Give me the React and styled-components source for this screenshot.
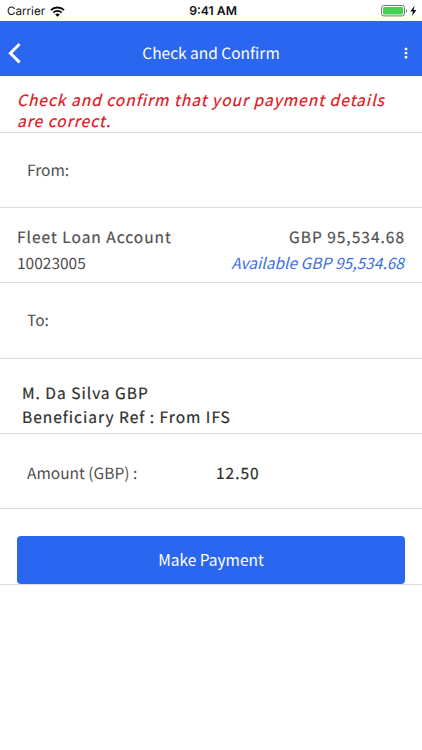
import React from 'react'
import styled, { createGlobalStyle } from 'styled-components'

const App = () => {
  return (
    <>
      <GlobalStyle />
      <Screen>
        <StatusBar>
          <Carrier>
            <span>Carrier</span>
            <svg width="15" height="11" viewBox="0 0 15 11">
              <g fill="none" stroke="#000" strokeWidth="1.9">
                <path d="M1 4.1a9.3 9.3 0 0 1 13 0" />
                <path d="M3.4 6.6a5.8 5.8 0 0 1 8.2 0" />
              </g>
              <path d="M7.5 10.8L5.2 8.5a3.3 3.3 0 0 1 4.6 0z" />
            </svg>
          </Carrier>
          <Clock>9:41 AM</Clock>
          <Power>
            <svg width="36" height="12" viewBox="0 0 36 12">
              <rect x="0.5" y="0.5" width="23" height="10.4" rx="2.2" fill="#fff" stroke="#777" />
              <rect x="2" y="2" width="20" height="7.4" rx="1" fill="#42d151" />
              <path d="M25 4a2 2 0 0 1 0 3.6z" fill="#777" />
              <path d="M33.6 0.6L29.4 6.4h2.6l-1 4.6 4.3-6h-2.7z" />
            </svg>
          </Power>
        </StatusBar>

        <Header>
          <BackButton>
            <svg width="14" height="22" viewBox="0 0 14 22">
              <path d="M11.6 2L2.4 11.2l9.2 9.2" fill="none" stroke="#fff" strokeWidth="3" />
            </svg>
          </BackButton>
          <Title>Check and Confirm</Title>
          <MenuButton>
            <svg width="4" height="12" viewBox="0 0 4 12" fill="#fff">
              <rect x="0.7" y="0.8" width="2.6" height="2.4" rx="0.6" />
              <rect x="0.7" y="4.9" width="2.6" height="2.4" rx="0.6" />
              <rect x="0.7" y="9" width="2.6" height="2.4" rx="0.6" />
            </svg>
          </MenuButton>
        </Header>

        <Notice>
          Check and confirm that your payment details<br />are correct.
        </Notice>

        <Row>
          <Label>From:</Label>
        </Row>

        <Account>
          <Line>
            <Text $strong>Fleet Loan Account</Text>
            <Text $strong>GBP 95,534.68</Text>
          </Line>
          <Line>
            <Text>10023005</Text>
            <Available>Available GBP 95,534.68</Available>
          </Line>
        </Account>

        <Row>
          <Label>To:</Label>
        </Row>

        <Beneficiary>
          <Text $dark $strong>M. Da Silva GBP</Text>
          <Text $dark $strong>Beneficiary Ref : From IFS</Text>
        </Beneficiary>

        <Row $top="4px">
          <Label>Amount (GBP) :</Label>
          <Text $dark $strong>12.50</Text>
        </Row>

        <Action>
          <PayButton>Make Payment</PayButton>
        </Action>
      </Screen>
    </>
  )
}

export default App

//styling

const GlobalStyle = createGlobalStyle`
  *{
    box-sizing: border-box;
  }
  body{
    margin: 0;
    background: #fff;
    font-family: "Noto Sans CJK SC", "Noto Sans", sans-serif;
    font-size: 15.5px;
    text-rendering: geometricPrecision;
  }
  svg{
    display: block;
  }
`

const Screen = styled.div`
  width: 100%;
  height: 750px;
  background: #fff;
  color: #505050;
  overflow: hidden;
`

const StatusBar = styled.div`
  display: grid;
  grid-template-columns: 1fr auto 1fr;
  align-items: center;
  height: 21px;
  padding: 1px 5px 0 7px;
  color: #111;
  font-family: Inter, sans-serif;
  font-size: 11.6px;
  line-height: 20px;
`

const Carrier = styled.div`
  display: flex;
  align-items: center;
  gap: 5px;
`

const Clock = styled.div`
  font-weight: 600;
  font-size: 12.2px;
  padding-left: 2px;
`

const Power = styled.div`
  display: flex;
  justify-content: flex-end;
`

const Header = styled.div`
  display: grid;
  grid-template-columns: 60px 1fr 60px;
  align-items: center;
  height: 55px;
  padding-top: 9px;
  background: #2b66f1;
  color: #fff;
`

const BackButton = styled.button`
  padding: 0 0 0 8px;
  border: none;
  background: none;
`

const Title = styled.div`
  text-align: center;
  line-height: 24px;
`

const MenuButton = styled.button`
  display: flex;
  justify-content: flex-end;
  padding: 0 14px 0 0;
  border: none;
  background: none;
`

const Notice = styled.div`
  height: 56.5px;
  padding: 14px 17px 0;
  border-bottom: 1px solid #dcdcdc;
  color: #dc1420;
  font-style: italic;
  line-height: 21px;
  letter-spacing: 1.02px;
  white-space: nowrap;
  -webkit-text-stroke: 0.2px;
`

const Row = styled.div`
  display: flex;
  align-items: center;
  height: 75.4px;
  padding: ${(props) => props.$top || '0'} 27px 0;
  border-bottom: 1px solid #dcdcdc;
`

const Label = styled.div`
  width: 189px;
  line-height: 24px;
`

const Text = styled.div`
  color: ${(props) => (props.$dark ? '#2e2e2e' : '#505050')};
  letter-spacing: ${(props) => (props.$strong ? '1px' : '0')};
  -webkit-text-stroke: ${(props) => (props.$strong ? '0.2px' : '0')};
  line-height: 24px;
  white-space: nowrap;
`

const Account = styled.div`
  display: flex;
  flex-direction: column;
  gap: 2.2px;
  height: 75.4px;
  padding: 17.4px 17px 0;
  border-bottom: 1px solid #dcdcdc;
`

const Line = styled.div`
  display: flex;
  justify-content: space-between;
`

const Available = styled.div`
  padding-right: 1px;
  color: #3a6fe8;
  font-style: italic;
  line-height: 24px;
  letter-spacing: 0.03px;
  white-space: nowrap;
`

const Beneficiary = styled.div`
  height: 75.4px;
  padding: 22.4px 22px 0;
  border-bottom: 1px solid #dcdcdc;
`

const Action = styled.div`
  height: 75.4px;
  padding: 27px 17px 0;
  border-bottom: 1px solid #dcdcdc;
`

const PayButton = styled.button`
  display: block;
  width: 100%;
  height: 48px;
  padding: 0 0 2px;
  border: none;
  border-radius: 4px;
  background: #2b66f1;
  color: #fff;
  font: inherit;
`
